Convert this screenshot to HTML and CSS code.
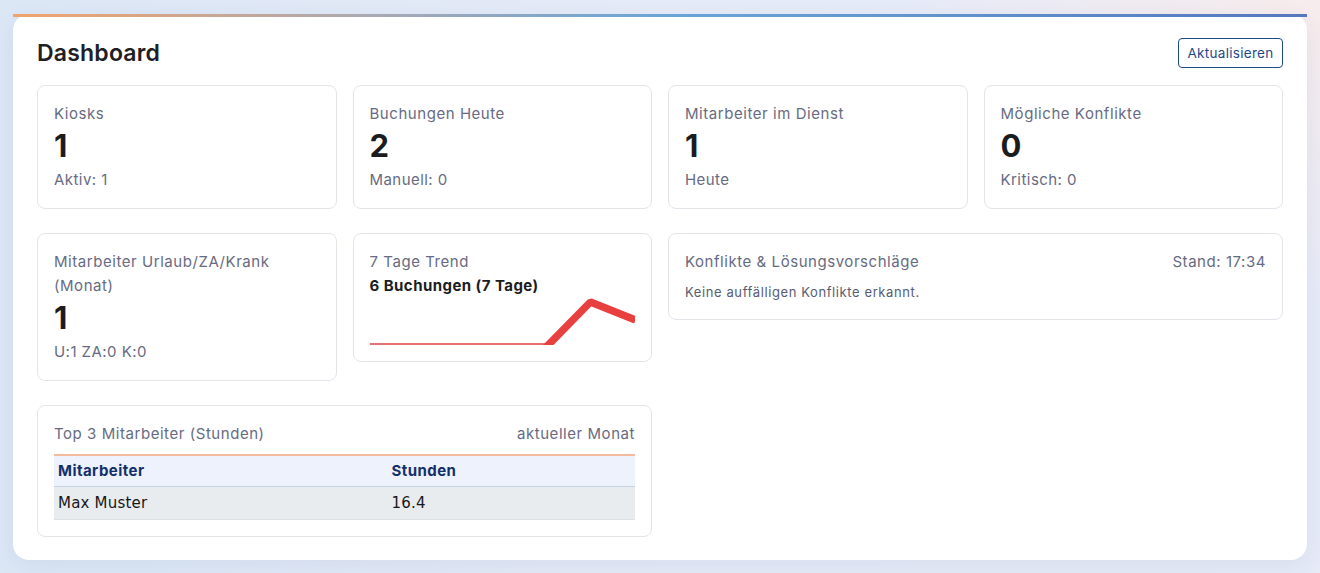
FILE: index.html
```html
<!DOCTYPE html>
<html lang="de">
<head>
<meta charset="utf-8">
<title>Dashboard</title>
<link rel="stylesheet" href="styles.css">
</head>
<body>
<main class="panel">
  <header class="panel-head">
    <h1 class="title">Dashboard</h1>
    <button class="btn-refresh" type="button">Aktualisieren</button>
  </header>
  <section class="grid">
    <div class="card stat">
      <div class="label">Kiosks</div>
      <div class="value">1</div>
      <div class="sub">Aktiv: 1</div>
    </div>
    <div class="card stat">
      <div class="label">Buchungen Heute</div>
      <div class="value">2</div>
      <div class="sub">Manuell: 0</div>
    </div>
    <div class="card stat">
      <div class="label">Mitarbeiter im Dienst</div>
      <div class="value">1</div>
      <div class="sub">Heute</div>
    </div>
    <div class="card stat">
      <div class="label">Mögliche Konflikte</div>
      <div class="value">0</div>
      <div class="sub">Kritisch: 0</div>
    </div>

    <div class="card stat">
      <div class="label">Mitarbeiter Urlaub/ZA/Krank (Monat)</div>
      <div class="value">1</div>
      <div class="sub">U:1 ZA:0 K:0</div>
    </div>
    <div class="card trend">
      <div class="label">7 Tage Trend</div>
      <div class="trend-total">6 Buchungen (7 Tage)</div>
      <svg class="spark" viewBox="0 0 265 47" preserveAspectRatio="none" aria-hidden="true">
        <path class="spark-flat" d="M0 46 L176 46"/>
        <path class="spark-up" d="M175 50 L220 4 L265 22"/>
      </svg>
    </div>
    <div class="card conflicts span2">
      <div class="card-head">
        <span class="label">Konflikte &amp; Lösungsvorschläge</span>
        <span class="label">Stand: 17:34</span>
      </div>
      <p class="note">Keine auffälligen Konflikte erkannt.</p>
    </div>

    <div class="card top span2">
      <div class="card-head">
        <span class="label">Top 3 Mitarbeiter (Stunden)</span>
        <span class="label">aktueller Monat</span>
      </div>
      <table class="tbl">
        <thead>
          <tr><th class="col-name">Mitarbeiter</th><th>Stunden</th></tr>
        </thead>
        <tbody>
          <tr><td>Max Muster</td><td>16.4</td></tr>
        </tbody>
      </table>
    </div>
  </section>
</main>
</body>
</html>
```

FILE: styles.css
```css
* { box-sizing: border-box; }

html, body { height: 100%; }

body {
  margin: 0;
  padding: 14px 13px 13px;
  font-family: Inter, "Noto Sans", sans-serif;
  color: #1d1e22;
  background:
    radial-gradient(ellipse 420px 300px at 100% 0%, rgba(248, 236, 236, 0.95), rgba(248, 236, 236, 0) 100%),
    linear-gradient(90deg, #dce7f6 0%, #e6ebf8 50%, #e7ebf8 100%);
}

.panel {
  background: #ffffff;
  border-style: solid;
  border-width: 3px 0 0 0;
  border-image: linear-gradient(90deg, #f2a36c 0%, #a8a9b3 28%, #6aa5d6 50%, #5f8fcb 75%, #5577bb 100%) 1;
  border-radius: 16px;
  padding: 21px 24px 23px;
  box-shadow: 0 6px 24px rgba(40, 60, 120, 0.08);
}

.panel-head {
  display: flex;
  align-items: center;
  justify-content: space-between;
  height: 30px;
  margin-bottom: 17px;
}

.title {
  margin: 0;
  font-size: 23px;
  font-weight: 600;
  letter-spacing: 0.2px;
  color: #1f2024;
}

.btn-refresh {
  height: 30px;
  width: 105px;
  padding: 0;
  border: 1px solid #1f4a8a;
  border-radius: 4px;
  background: #ffffff;
  color: #1f4a8a;
  font-family: Inter, "Noto Sans", sans-serif;
  font-size: 13.5px;
  letter-spacing: 0.3px;
}

.grid {
  display: grid;
  grid-template-columns: repeat(4, 1fr);
  column-gap: 16px;
  row-gap: 24px;
  align-items: start;
}

.span2 { grid-column: span 2; }

.card {
  border: 1px solid #e3e5ea;
  border-radius: 8px;
  padding: 16px;
  background: #ffffff;
}

.label {
  font-size: 15px;
  line-height: 24px;
  color: #676b82;
  letter-spacing: 0.55px;
}

.value {
  margin-top: 2px;
  font-size: 31px;
  line-height: 36px;
  font-weight: 700;
  color: #1b1c20;
}

.sub {
  margin-top: 4px;
  font-size: 15px;
  line-height: 24px;
  color: #676b82;
  letter-spacing: 0.45px;
}

.trend-total {
  font-size: 15px;
  line-height: 24px;
  font-weight: 700;
  color: #1b1c20;
  letter-spacing: 0.45px;
}

.spark {
  display: block;
  width: 100%;
  height: 47px;
  overflow: hidden;
}

.spark-flat {
  fill: none;
  stroke: #df3f42;
  stroke-width: 1.6;
}

.spark-up {
  fill: none;
  stroke: #e8403f;
  stroke-width: 7.5;
  stroke-linejoin: bevel;
}

.card-head {
  display: flex;
  justify-content: space-between;
  align-items: center;
}

.note {
  margin: 8px 0 0;
  font-size: 13px;
  line-height: 21px;
  color: #585c70;
  letter-spacing: 0.6px;
}

.tbl {
  width: 100%;
  margin-top: 8px;
  border-collapse: separate;
  border-spacing: 0;
}

.tbl th {
  text-align: left;
  padding: 4px;
  line-height: 22px;
  font-size: 15px;
  font-weight: 700;
  color: #14306a;
  letter-spacing: 0.45px;
  background: #eef2fc;
  border-top: 2px solid #f4bb9c;
  border-bottom: 1px solid #c6d3e5;
}

.tbl .col-name { width: 57.4%; }

.tbl td {
  padding: 5px 4px;
  line-height: 22px;
  font-family: "DejaVu Sans", "Liberation Sans", sans-serif;
  font-size: 15px;
  letter-spacing: 0.2px;
  color: #16171a;
  background: #e9ecef;
  border-bottom: 1px solid #dde1e6;
}
```
